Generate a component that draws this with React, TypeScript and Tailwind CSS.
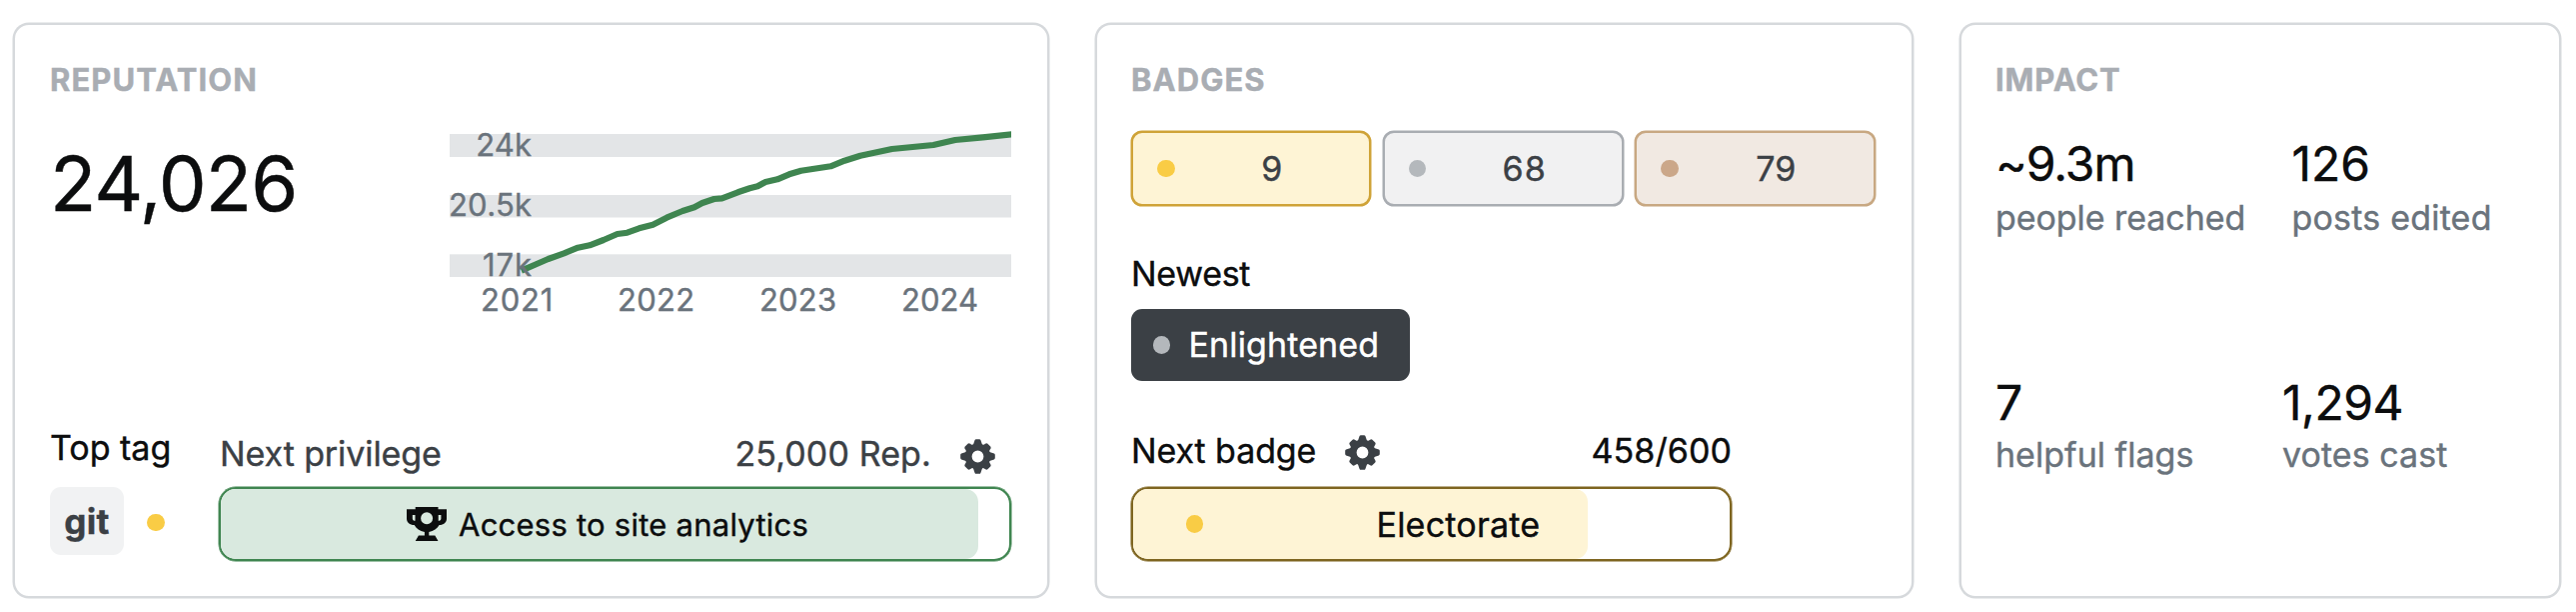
import React from "react";

const CARD =
  "flex flex-col h-[575px] rounded-[16px] border-2 border-[#d6d9dc] bg-white shadow-[0_0_0_0.5px_#d6d9dc] pt-[39px]";

function Title({ children, className = "" }: { children: React.ReactNode; className?: string }) {
  return (
    <h2 className={`h-[31px] text-[31px] leading-[31px] font-bold text-[#a9adb3] ${className}`}>{children}</h2>
  );
}

function Gear() {
  return (
    <svg width="35" height="35" viewBox="-17.5 -17.5 35 35" className="shrink-0" fill="#3b4045">
      <circle r="9.4" fill="none" stroke="#3b4045" strokeWidth="7" />
      {[0, 90, 180, 270].map((a) => (
        <path key={a} transform={`rotate(${a})`} d="M-4.8-11L-2.9-16.4Q-2.6-17.3-1.6-17.3H1.6Q2.6-17.3 2.9-16.4L4.8-11Z" />
      ))}
      {[45, 135, 225, 315].map((a) => (
        <path key={a} transform={`rotate(${a})`} d="M-4.6-11L-3.4-15Q-3-16-2-16H2Q3-16 3.4-15L4.6-11Z" />
      ))}
    </svg>
  );
}

function Trophy() {
  return (
    <svg width="40" height="34" viewBox="0 0 40 34" className="shrink-0" fill="#0c0d0e" fillRule="evenodd">
      <path d="M8.7 0H31.5V2.2H40V11.5C40 15.5 37 18 32.6 18C30.5 21.6 27 24.3 22.3 25V28.6H28.3L31.5 34H8.7L11.9 28.6H17.9V25C13 24.3 9.7 21.6 7.6 18C3 18 0 15.5 0 11.5V2.2H8.7ZM20.1 5.3A6 6 0 1 0 20.1 17.3A6 6 0 1 0 20.1 5.3ZM5.8 8V11.5C5.8 12.9 6.9 13.8 8.5 13.8V8ZM31.7 8V13.8C33.3 13.8 34.4 12.9 34.4 11.5V8Z" />
    </svg>
  );
}

const Dot = ({ className }: { className: string }) => (
  <span className={`size-[17.5px] shrink-0 rounded-full ${className}`} />
);

const line =
  "73.7,145.7 86.8,140 100.6,134 116.4,128.3 130.3,122.7 142.1,120.3 156,115 169.8,109 179.7,107.7 191.6,103.3 205.4,99.7 219.2,92.7 235.1,86 246.9,82.3 254.8,78 266.7,74 274.6,73.3 290.4,67.3 302.3,63.3 310.2,61.3 318.1,57 330,54.3 341.8,49.3 353.7,45.7 383.3,41.3 397.2,35.7 413,30.7 444.6,24 486.1,20 507.9,15 535.6,12.3 566,9.1";

function Chart() {
  return (
    <svg width="564" height="200" viewBox="0 0 564 200" className="mt-[30px] text-[31px]" fill="#6a737c">
      <g fill="#e3e5e7">
        <rect x="2" y="9" width="562" height="23" />
        <rect x="2" y="70" width="562" height="22.5" />
        <rect x="2" y="129.3" width="562" height="22.7" />
      </g>
      <polyline points={line} fill="none" stroke="#3f8550" strokeWidth="6.2" strokeLinejoin="round" />
      <g stroke="#6a737c" strokeWidth="0.4">
        <text x="28.2" y="30.7" letterSpacing="0.2">24k</text>
        <text x="0.9" y="90.7" letterSpacing="0.3">20.5k</text>
        <text x="35" y="150.7" letterSpacing="0.9">17k</text>
        <text x="33" y="185.7" letterSpacing="0.8">2021</text>
        <text x="170" y="185.7" letterSpacing="0.3">2022</text>
        <text x="312" y="185.7" letterSpacing="0.2">2023</text>
        <text x="454" y="185.7" letterSpacing="0.04">2024</text>
      </g>
    </svg>
  );
}

function Chip({ value, box, dot, spacing }: { value: string; box: string; dot: string; spacing: string }) {
  return (
    <div className={`flex h-[75px] items-center rounded-[11px] border-2 pl-[24px] text-[#3b4045] ${box}`}>
      <Dot className={dot} />
      <span className={`flex-1 text-center ${spacing}`}>{value}</span>
    </div>
  );
}

function Stat({ value, label, vs, ls, gap }: { value: string; label: string; vs: string; ls: string; gap: string }) {
  return (
    <div className="whitespace-nowrap">
      <div className={`text-[48px] leading-[48px] ${vs}`}>{value}</div>
      <div className={`text-[#6a737c] ${gap} ${ls}`}>{label}</div>
    </div>
  );
}

export default function App() {
  return (
    <main className="flex h-[612px] w-[2578px] overflow-hidden bg-white pt-[23px] pl-[13px] font-['Inter',sans-serif] text-[34px] leading-[34px] text-[#0c0d0e] [-webkit-text-stroke:0.4px]">
      <section className={`${CARD} w-[1036.5px] pr-[35.5px] pl-[35px]`}>
        <Title className="tracking-[1.07px]">REPUTATION</Title>
        <div className="flex items-start justify-between">
          <div className="mt-[49.5px] text-[76px] leading-[76px] tracking-[-0.95px]">24,026</div>
          <Chart />
        </div>
        <div className="mt-auto mb-[35px] flex h-[131px] justify-between">
          <div>
            <div className="mt-[0.5px] whitespace-nowrap">Top tag</div>
            <div className="mt-[22.5px] flex items-center">
              <span className="flex h-[68px] w-[74px] items-center justify-center rounded-[11px] bg-[#f1f2f3] text-[35px] font-bold tracking-[0.3px] text-[#3b4045]">
                git
              </span>
              <Dot className="mt-[3px] ml-[23px] bg-[#f9cc45]" />
            </div>
          </div>
          <div className="w-[793px] pt-[7px] text-[#3b4045]">
            <div className="flex pl-[1px]">
              <span className="tracking-[-0.09px]">Next privilege</span>
              <span className="mr-[29px] ml-auto tracking-[0.13px]">25,000 Rep.</span>
              <span className="mt-[2px] mr-[16px] h-[32px]">
                <Gear />
              </span>
            </div>
            <div className="relative mt-[16px] flex h-[74px] items-center overflow-hidden rounded-[17px] border-2 border-[#3f8550] pl-[186px] shadow-[0_0_0_0.5px_#3f8550]">
              <div className="absolute inset-y-0 left-0 w-[758px] rounded-r-[13px] bg-[#d9e9df]" />
              <div className="relative flex items-center text-[31px] leading-[31px] text-[#0c0d0e]">
                <Trophy />
                <span className="ml-[12px] tracking-[0.24px]">Access to site analytics</span>
              </div>
            </div>
          </div>
        </div>
      </section>

      <section className={`${CARD} ml-[46px] w-[819px] pl-[34.5px]`}>
        <Title className="tracking-[1.03px]">BADGES</Title>
        <div className="mt-[36px] grid w-[745px] grid-cols-[240px_241px_241px] gap-[11.5px]">
          <Chip value="9" spacing="" box="border-[#cfa338] bg-[#fef4d5] shadow-[0_0_0_0.5px_#cfa338]" dot="bg-[#f9cc45]" />
          <Chip value="68" spacing="pl-[2px] tracking-[1.3px]" box="border-[#a9adb2] bg-[#f1f1f2] shadow-[0_0_0_0.5px_#a9adb2]" dot="bg-[#b4b8bc]" />
          <Chip value="79" spacing="tracking-[0.1px]" box="border-[#c8a882] bg-[#f1e9e2] shadow-[0_0_0_0.5px_#c8a882]" dot="bg-[#cba789]" />
        </div>
        <div className="mt-[51px] tracking-[-0.3px]">Newest</div>
        <div className="mt-[18px] flex h-[72px] w-[278.5px] items-center rounded-[11px] bg-[#3b4045] pl-[21.5px] text-white">
          <Dot className="bg-[#b4b8bc]" />
          <span className="ml-[18.5px] pb-px tracking-[0.13px]">Enlightened</span>
        </div>
        <div className="mt-[53px] flex w-[601px]">
          <span className="tracking-[-0.1px]">Next badge</span>
          <span className="mt-px ml-[28.5px] h-[33px]">
            <Gear />
          </span>
          <span className="ml-auto tracking-[0.09px]">458/600</span>
        </div>
        <div className="relative mt-[19px] flex h-[74px] w-[601px] items-center overflow-hidden rounded-[17px] border-2 border-[#7e6520] pl-[52.5px] shadow-[0_0_0_0.5px_#7e6520]">
          <div className="absolute inset-y-0 left-0 w-[455px] rounded-r-[13px] bg-[#fef4d5]" />
          <Dot className="relative bg-[#f9cc45]" />
          <span className="relative ml-[173.5px] pt-px tracking-[0.22px]">Electorate</span>
        </div>
      </section>

      <section className={`${CARD} ml-[46px] w-[602px] pl-[34.5px]`}>
        <Title className="tracking-[0.85px]">IMPACT</Title>
        <div className="mt-[44.5px] grid grid-cols-[296.5px_1fr]">
          <Stat value="~9.3m" label="people reached" vs="tracking-[-1px]" ls="tracking-[-0.06px]" gap="mt-[13px]" />
          <Stat value="126" label="posts edited" vs="" ls="tracking-[0.2px]" gap="mt-[13px]" />
        </div>
        <div className="mt-[144px] grid grid-cols-[287px_1fr]">
          <Stat value="7" label="helpful flags" vs="" ls="tracking-[0.02px]" gap="mt-[11.5px]" />
          <Stat value="1,294" label="votes cast" vs="tracking-[-0.47px]" ls="tracking-[0.05px]" gap="mt-[11.5px]" />
        </div>
      </section>
    </main>
  );
}
